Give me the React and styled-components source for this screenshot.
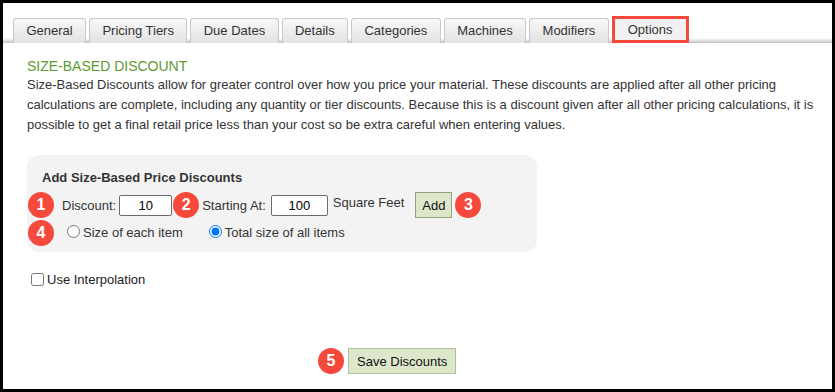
import React from 'react';
import styled, { createGlobalStyle } from 'styled-components';

const GlobalStyle = createGlobalStyle`
  html, body {
    margin: 0;
    padding: 0;
    background: #fff;
  }
  body {
    font-family: "Liberation Sans", Arial, Helvetica, sans-serif;
    color: #333;
  }
`;

// 화면 전체를 감싸는 검은 테두리 프레임
const Frame = styled.div`
  width: 835px;
  height: 392px;
  box-sizing: border-box;
  border: 3px solid #000;
  background: #fff;
  overflow: hidden;
`;

// 탭 줄 - 아래쪽에 회색 그라데이션 선
const TabBar = styled.div`
  display: flex;
  align-items: flex-end;
  gap: 3px;
  padding: 13px 0 0 10px;
  height: 40px;
  box-sizing: border-box;
  background: linear-gradient(#ffffff, #c2c2c2) left bottom / 100% 5px no-repeat;
`;

const Tab = styled.div`
  height: ${props => (props.active ? '27px' : '25px')};
  box-sizing: border-box;
  padding: 0 ${props => (props.active ? '13px' : '12.4px')};
  border: ${props => (props.active ? '3px solid #f4493b' : '1px solid #c9c9c9')};
  border-bottom: ${props => (props.active ? '3px solid #f4493b' : 'none')};
  border-radius: ${props => (props.active ? '0' : '3px 3px 0 0')};
  background: ${props =>
    props.active ? '#f1f1f1' : 'linear-gradient(#f8f8f8, #e2e2e2)'};
  font-size: 13px;
  line-height: ${props => (props.active ? '22px' : '24px')};
  color: #333;
  white-space: nowrap;
`;

const Content = styled.div`
  padding: 0 0 0 24px;
`;

const Heading = styled.h2`
  margin: 15px 0 0;
  font-size: 14px;
  line-height: 16px;
  font-weight: 400;
  color: #5c9a30;
`;

const Intro = styled.p`
  margin: 1px 0 0;
  font-size: 13px;
  line-height: 20px;
  color: #333;
  white-space: nowrap;
`;

// 회색 박스
const Panel = styled.div`
  width: 510px;
  margin-top: 20px;
  box-sizing: border-box;
  padding: 15px 15px 7px;
  background: #f3f3f3;
  border-radius: 12px;
`;

const PanelTitle = styled.div`
  font-size: 13px;
  line-height: 16px;
  font-weight: 700;
  color: #333;
`;

const Row = styled.div`
  display: flex;
  align-items: center;
  height: ${props => props.h || 26}px;
  margin-top: ${props => props.mt || 0}px;
`;

// 번호 뱃지 (주석용)
const Badge = styled.span`
  flex: none;
  display: inline-flex;
  align-items: center;
  justify-content: center;
  width: 26px;
  height: 26px;
  border-radius: 50%;
  background: #f4493b;
  color: #fff;
  font-size: 16px;
  font-weight: 700;
  margin-left: ${props => props.ml || 0}px;
  margin-right: ${props => props.mr || 0}px;
`;

const Label = styled.span`
  font-size: 13px;
  color: #333;
  margin-left: ${props => props.ml || 0}px;
  margin-right: ${props => props.mr || 0}px;
  margin-bottom: ${props => props.raise || 0}px;
  white-space: nowrap;
`;

const NumInput = styled.input`
  width: ${props => props.w}px;
  height: 21px;
  box-sizing: border-box;
  border: 1px solid #6b6b6b;
  border-radius: 2px;
  background: #fff;
  text-align: center;
  font-family: inherit;
  font-size: 13px;
  color: #000;
  padding: 0;
  margin: 0 ${props => props.mr || 0}px 0 0;
`;

const GreenButton = styled.button`
  height: 26px;
  box-sizing: border-box;
  padding: 0 ${props => props.px || 6}px;
  background: #dde8cb;
  border: 1px solid ${props => props.bc || '#93a37f'};
  border-radius: 0;
  font-family: inherit;
  font-size: 13px;
  color: #111;
  margin-left: ${props => props.ml || 0}px;
  margin-right: ${props => props.mr || 0}px;
`;

const Radio = styled.input.attrs({ type: 'radio', name: 'size' })`
  width: 13px;
  height: 13px;
  margin: 0 3px 3px ${props => props.ml || 0}px;
`;

const CheckRow = styled.label`
  display: flex;
  align-items: center;
  margin: 20px 0 0 4px;
  font-size: 13px;
  color: #222;
`;

const Check = styled.input.attrs({ type: 'checkbox' })`
  width: 13px;
  height: 13px;
  margin: 0 3px 0 0;
`;

const Footer = styled.div`
  display: flex;
  align-items: center;
  margin-top: 61px;
  padding-left: 291px;
`;

const tabs = [
  'General',
  'Pricing Tiers',
  'Due Dates',
  'Details',
  'Categories',
  'Machines',
  'Modifiers',
  'Options',
];

function App() {
  return (
    <Frame>
      <GlobalStyle />
      <TabBar>
        {tabs.map(t => (
          <Tab key={t} active={t === 'Options'}>
            {t}
          </Tab>
        ))}
      </TabBar>
      <Content>
        <Heading>SIZE-BASED DISCOUNT</Heading>
        <Intro>
          Size-Based Discounts allow for greater control over how you price your
          material. These discounts are applied after all other pricing
          <br />
          calculations are complete, including any quantity or tier discounts.
          Because this is a discount given after all other pricing calculations,
          it is
          <br />
          possible to get a final retail price less than your cost so be extra
          careful when entering values.
        </Intro>

        <Panel>
          <PanelTitle>Add Size-Based Price Discounts</PanelTitle>
          <Row mt={6}>
            <Badge ml={-14} mr={8}>1</Badge>
            <Label mr={3}>Discount:</Label>
            <NumInput w={53} defaultValue="10" />
            <Badge ml={1} mr={3}>2</Badge>
            <Label mr={5}>Starting At:</Label>
            <NumInput w={57} defaultValue="100" />
            <Label ml={5} raise={5}>Square Feet</Label>
            <GreenButton ml={11} mr={3}>Add</GreenButton>
            <Badge>3</Badge>
          </Row>
          <Row mt={2} h={25}>
            <Badge ml={-14} mr={13}>4</Badge>
            <Radio />
            <Label>Size of each item</Label>
            <Radio ml={26} defaultChecked />
            <Label>Total size of all items</Label>
          </Row>
        </Panel>

        <CheckRow>
          <Check />
          Use Interpolation
        </CheckRow>

        <Footer>
          <Badge mr={4}>5</Badge>
          <GreenButton px={8} bc="#b3c29c">Save Discounts</GreenButton>
        </Footer>
      </Content>
    </Frame>
  );
}

export default App;
